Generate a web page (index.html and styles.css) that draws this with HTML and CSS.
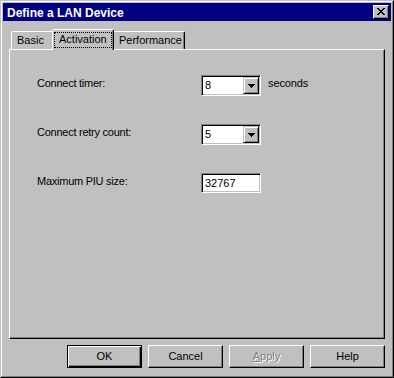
FILE: index.html
```html
<!DOCTYPE html>
<html>
<head>
<meta charset="utf-8">
<link rel="stylesheet" href="styles.css">
</head>
<body>
<div class="window">
  <div class="frame">
    <div class="titlebar">
      <span class="title">Define a LAN Device</span>
      <button class="close" type="button" aria-label="Close">
        <svg width="8" height="7" viewBox="0 0 8 7" shape-rendering="crispEdges">
          <path fill="#000" d="M0 0h2v1H0zM6 0h2v1H6zM1 1h2v1H1zM5 1h2v1H5zM2 2h4v1H2zM3 3h2v1H3zM2 4h4v1H2zM1 5h2v1H1zM5 5h2v1H5zM0 6h2v1H0zM6 6h2v1H6z"/>
        </svg>
      </button>
    </div>
    <div class="body">
      <div class="tabs">
        <div class="tab tab-basic">Basic</div>
        <div class="tab tab-activation selected"><span class="focus">Activation</span></div>
        <div class="tab tab-performance">Performance</div>
      </div>
      <div class="panel">
        <div class="row">
          <span class="lbl">Connect timer:</span>
          <div class="combo">
            <span class="val">8</span>
            <span class="drop"><svg width="7" height="4" viewBox="0 0 7 4" shape-rendering="crispEdges"><path fill="#000" d="M0 0h7v1H0zM1 1h5v1H1zM2 2h3v1H2zM3 3h1v1H3z"/></svg></span>
          </div>
          <span class="unit">seconds</span>
        </div>
        <div class="row">
          <span class="lbl">Connect retry count:</span>
          <div class="combo">
            <span class="val">5</span>
            <span class="drop"><svg width="7" height="4" viewBox="0 0 7 4" shape-rendering="crispEdges"><path fill="#000" d="M0 0h7v1H0zM1 1h5v1H1zM2 2h3v1H2zM3 3h1v1H3z"/></svg></span>
          </div>
        </div>
        <div class="row row-edit">
          <span class="lbl">Maximum PIU size:</span>
          <div class="edit"><span class="val">32767</span></div>
        </div>
      </div>
      <div class="buttons">
        <button class="btn default" type="button">OK</button>
        <button class="btn" type="button">Cancel</button>
        <button class="btn disabled" type="button"><u>A</u>pply</button>
        <button class="btn" type="button">Help</button>
      </div>
    </div>
  </div>
</div>
</body>
</html>
```

FILE: styles.css
```css
html, body {
  margin: 0;
  padding: 0;
}
body {
  width: 394px;
  height: 378px;
  background: #c0c0c0;
  font-family: "Liberation Sans", Arial, sans-serif;
  font-size: 11px;
  color: #000;
}
.window {
  width: 394px;
  height: 378px;
  box-sizing: border-box;
  border: 1px solid;
  border-color: #c0c0c0 #000 #000 #c0c0c0;
  background: #c0c0c0;
}
.frame {
  height: 100%;
  box-sizing: border-box;
  border: 1px solid;
  border-color: #fff #808080 #808080 #fff;
  padding: 1px;
  display: flex;
  flex-direction: column;
}
.titlebar {
  height: 18px;
  flex: none;
  background: #000080;
  display: flex;
  align-items: center;
  padding: 0 2px 0 2px;
}
.title {
  flex: 1;
  color: #fff;
  font-weight: bold;
  font-size: 12px;
  line-height: 18px;
  padding-left: 2px;
  padding-top: 1px;
  white-space: nowrap;
}
.close {
  width: 16px;
  height: 14px;
  box-sizing: border-box;
  border: 1px solid;
  border-color: #fff #000 #000 #fff;
  box-shadow: inset -1px -1px #808080;
  background: #c0c0c0;
  padding: 2px 0 0 3px;
  margin: 0;
  display: flex;
  align-items: flex-start;
  justify-content: flex-start;
}
.close svg {
  display: block;
}
.body {
  flex: 1;
  display: flex;
  flex-direction: column;
  padding: 8px 6px 0;
}
.tabs {
  display: flex;
  align-items: flex-end;
  height: 20px;
  padding-left: 2px;
}
.tab {
  height: 18px;
  box-sizing: border-box;
  border: 1px solid;
  border-bottom: none;
  border-color: #fff #000 transparent #fff;
  box-shadow: inset -1px 0 #808080;
  border-radius: 2px 2px 0 0;
  padding: 2px 0 0 5px;
  line-height: 13px;
  white-space: nowrap;
  background: #c0c0c0;
}
.tab-basic { width: 43px; }
.tab-performance { width: 73px; padding-left: 6px; }
.tab.selected {
  width: 62px;
  height: 21px;
  margin: 0 -2px -1px;
  position: relative;
  z-index: 1;
  padding: 2px 1px 0 1px;
}
.focus {
  display: block;
  height: 16px;
  box-sizing: border-box;
  border: 1px dotted #000;
  padding: 0 0 0 4px;
  line-height: 13px;
}
.panel {
  height: 290px;
  box-sizing: border-box;
  border: 1px solid;
  border-color: #fff #000 #000 #fff;
  box-shadow: inset -1px -1px #808080;
  padding: 25px 0 0 27px;
  flex: none;
}
.row {
  display: flex;
  height: 21px;
  margin-bottom: 28px;
}
.row-edit {
  height: 20px;
}
.lbl {
  width: 164px;
  padding-top: 2px;
  line-height: 13px;
  letter-spacing: -0.25px;
  flex: none;
}
.unit {
  margin-left: 7px;
  padding-top: 2px;
  line-height: 13px;
  letter-spacing: -0.1px;
}
.combo, .edit {
  width: 60px;
  height: 21px;
  box-sizing: border-box;
  border: 1px solid;
  border-color: #808080 #fff #fff #808080;
  box-shadow: inset 1px 1px #000, inset -1px -1px #c0c0c0;
  background: #fff;
  padding: 1px;
  display: flex;
  flex: none;
}
.edit {
  height: 20px;
}
.val {
  flex: 1;
  padding: 2px 0 0 2px;
  line-height: 13px;
}
.drop {
  width: 16px;
  height: 17px;
  box-sizing: border-box;
  border: 1px solid;
  border-color: #c0c0c0 #000 #000 #c0c0c0;
  box-shadow: inset 1px 1px #fff, inset -1px -1px #808080;
  background: #c0c0c0;
  display: flex;
  align-items: center;
  justify-content: center;
  flex: none;
}
.drop svg {
  display: block;
}
.buttons {
  display: flex;
  justify-content: flex-end;
  gap: 6px;
  margin-top: 6px;
}
.btn {
  width: 75px;
  height: 23px;
  box-sizing: border-box;
  border: 1px solid;
  border-color: #fff #000 #000 #fff;
  box-shadow: inset -1px -1px #808080;
  background: #c0c0c0;
  font-family: "Liberation Sans", Arial, sans-serif;
  font-size: 11px;
  color: #000;
  padding: 0;
  margin: 0;
  line-height: 13px;
}
.btn.default {
  border-color: #000;
  box-shadow: inset 1px 1px #fff, inset -1px -1px #000, inset -2px -2px #808080;
}
.btn.disabled {
  color: #808080;
  text-shadow: 1px 1px #fff;
}
.btn u {
  text-decoration: underline;
}
```
